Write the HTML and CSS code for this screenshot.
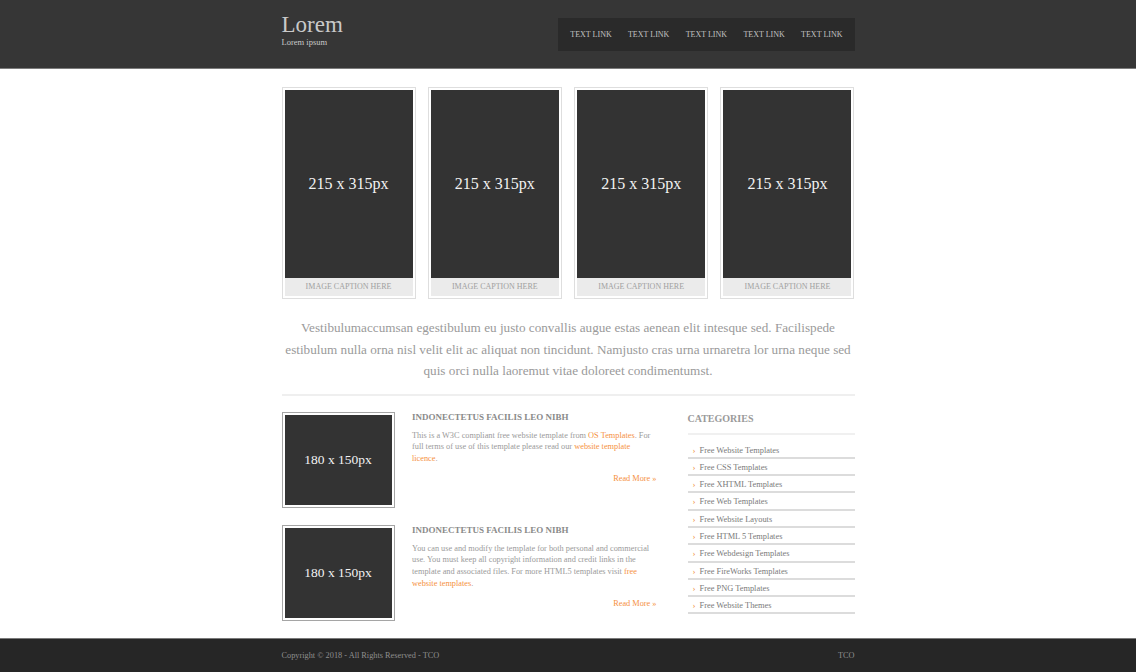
FILE: index.html
```html
<!DOCTYPE html>
<html lang="en">
<head>
<meta charset="utf-8">
<title>Lorem</title>
<link rel="stylesheet" href="styles.css">
</head>
<body>
<header class="hdr">
  <div class="wrap hdr-in">
    <div class="logo">
      <div class="logo-t">Lorem</div>
      <div class="logo-s">Lorem ipsum</div>
    </div>
    <nav class="nav">
      <a href="#">TEXT LINK</a>
      <a href="#">TEXT LINK</a>
      <a href="#">TEXT LINK</a>
      <a href="#">TEXT LINK</a>
      <a href="#">TEXT LINK</a>
    </nav>
  </div>
</header>

<main class="wrap main">
  <section class="gallery">
    <figure class="gitem"><div class="gimg">215 x 315px</div><figcaption class="gcap">IMAGE CAPTION HERE</figcaption></figure>
    <figure class="gitem"><div class="gimg">215 x 315px</div><figcaption class="gcap">IMAGE CAPTION HERE</figcaption></figure>
    <figure class="gitem"><div class="gimg">215 x 315px</div><figcaption class="gcap">IMAGE CAPTION HERE</figcaption></figure>
    <figure class="gitem"><div class="gimg">215 x 315px</div><figcaption class="gcap">IMAGE CAPTION HERE</figcaption></figure>
  </section>

  <p class="intro">Vestibulumaccumsan egestibulum eu justo convallis augue estas aenean elit intesque sed. Facilispede estibulum nulla orna nisl velit elit ac aliquat non tincidunt. Namjusto cras urna urnaretra lor urna neque sed quis orci nulla laoremut vitae doloreet condimentumst.</p>

  <div class="cols">
    <div class="posts">
      <article class="post">
        <div class="pimg"><div class="pimg-in">180 x 150px</div></div>
        <div class="pbody">
          <h2 class="ptitle">INDONECTETUS FACILIS LEO NIBH</h2>
          <p class="ptext">This is a W3C compliant free website template from <a href="#">OS Templates</a>. For full terms of use of this template please read our <a href="#">website template licence</a>.</p>
          <p class="more"><a href="#">Read More &raquo;</a></p>
        </div>
      </article>
      <article class="post">
        <div class="pimg"><div class="pimg-in">180 x 150px</div></div>
        <div class="pbody">
          <h2 class="ptitle">INDONECTETUS FACILIS LEO NIBH</h2>
          <p class="ptext">You can use and modify the template for both personal and commercial use. You must keep all copyright information and credit links in the template and associated files. For more HTML5 templates visit <a href="#">free website templates</a>.</p>
          <p class="more"><a href="#">Read More &raquo;</a></p>
        </div>
      </article>
    </div>

    <aside class="side">
      <h2 class="side-t">CATEGORIES</h2>
      <ul class="cats">
        <li><a href="#">Free Website Templates</a></li>
        <li><a href="#">Free CSS Templates</a></li>
        <li><a href="#">Free XHTML Templates</a></li>
        <li><a href="#">Free Web Templates</a></li>
        <li><a href="#">Free Website Layouts</a></li>
        <li><a href="#">Free HTML 5 Templates</a></li>
        <li><a href="#">Free Webdesign Templates</a></li>
        <li><a href="#">Free FireWorks Templates</a></li>
        <li><a href="#">Free PNG Templates</a></li>
        <li><a href="#">Free Website Themes</a></li>
      </ul>
    </aside>
  </div>
</main>

<footer class="ftr">
  <div class="wrap ftr-in">
    <span>Copyright &copy; 2018 - All Rights Reserved - TCO</span>
    <span>TCO</span>
  </div>
</footer>
</body>
</html>
```

FILE: styles.css
```css
* { box-sizing: border-box; }
html, body { margin: 0; padding: 0; }
body {
  font-family: "Liberation Serif", "DejaVu Serif", serif;
  background: #fff;
  color: #999;
}
a { text-decoration: none; }
.wrap { width: 573px; margin: 0 auto; }

/* header */
.hdr {
  background: #363636;
  height: 69px;
  border-bottom: 1px solid #7c7c7c;
}
.hdr-in {
  display: flex;
  justify-content: space-between;
  align-items: flex-start;
}
.logo { padding-top: 12px; color: #c9c9c9; }
.logo-t { font-size: 23px; line-height: 25px; }
.logo-s { font-size: 8.5px; line-height: 10px; }
.nav {
  margin-top: 18px;
  height: 33px;
  background: #2a2a2a;
  display: flex;
  align-items: center;
  gap: 16.3px;
  padding: 0 12px;
}
.nav a { color: #c2c2c2; font-size: 8px; }

/* gallery */
.main { padding-top: 18px; padding-bottom: 17px; }
.gallery { display: flex; justify-content: space-between; }
.gitem {
  margin: 0;
  width: 134px;
  border: 1px solid #dedede;
  padding: 2px;
}
.gimg {
  height: 188px;
  background: #333;
  color: #f2f2f2;
  font-size: 16px;
  display: flex;
  align-items: center;
  justify-content: center;
}
.gcap {
  height: 18px;
  line-height: 18px;
  background: #ebebeb;
  color: #a0a0a0;
  font-size: 8px;
  text-align: center;
}

/* intro */
.intro {
  margin: 18px 0 0;
  padding-bottom: 12px;
  border-bottom: 2px solid #efefef;
  text-align: center;
  font-size: 13.2px;
  line-height: 21.5px;
  color: #9a9a9a;
}

/* columns */
.cols {
  display: flex;
  justify-content: space-between;
  margin-top: 16px;
}
.posts { width: 375px; display: flex; flex-direction: column; gap: 17px; }
.post { display: flex; gap: 17.5px; }
.pimg {
  flex: none;
  width: 113px;
  height: 96px;
  border: 1px solid #a5a5a5;
  padding: 2px;
}
.pimg-in {
  height: 100%;
  background: #333;
  color: #f2f2f2;
  font-size: 13.5px;
  display: flex;
  align-items: center;
  justify-content: center;
}
.pbody { flex: 1; }
.ptitle {
  margin: 0;
  font-size: 9px;
  line-height: 11px;
  color: #8a8a8a;
}
.ptext {
  margin: 7px 0 0;
  font-size: 8.3px;
  line-height: 11.8px;
  color: #9a9a9a;
}
.ptext a, .more a { color: #f59142; }
.more {
  margin: 8px 0 0;
  text-align: right;
  font-size: 8.3px;
  line-height: 12px;
}

/* sidebar */
.side { width: 167px; }
.side-t {
  margin: 0;
  padding-top: 1px;
  padding-bottom: 8px;
  font-size: 10px;
  line-height: 12px;
  color: #9a9a9a;
  border-bottom: 2px solid #f0f0f0;
}
.cats { list-style: none; margin: 7px 0 0; padding: 0; }
.cats li {
  height: 17.3px;
  line-height: 16px;
  border-bottom: 2px solid #dcdcdc;
  padding-left: 5px;
  font-size: 8.4px;
}
.cats li::before {
  content: "\203A";
  color: #f08a3a;
  font-size: 9px;
  margin-right: 4px;
}
.cats a { color: #7a7a7a; }

/* footer */
.ftr {
  background: #262626;
  border-top: 1px solid #7a7a7a;
  height: 40px;
}
.ftr-in {
  display: flex;
  justify-content: space-between;
  padding-top: 11px;
  font-size: 8.3px;
  line-height: 12px;
  color: #8f8f8f;
}
```
